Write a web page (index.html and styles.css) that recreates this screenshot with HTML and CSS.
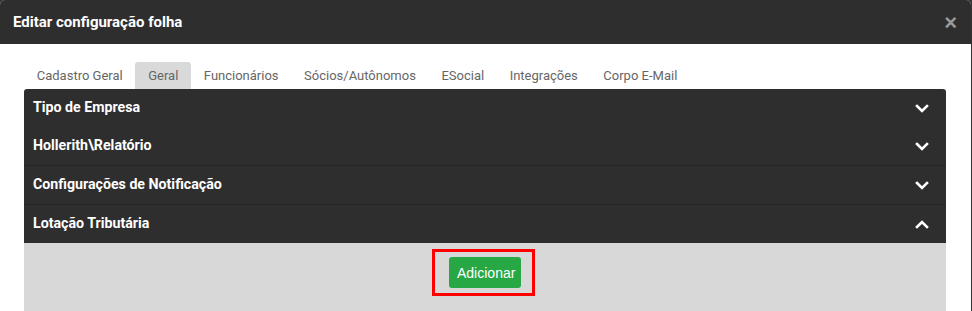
FILE: index.html
```html
<!DOCTYPE html>
<html lang="pt-BR">

<head>
  <meta charset="UTF-8">
  <meta name="viewport" content="width=device-width, initial-scale=1.0">
  <link rel="stylesheet" href="styles.css">
</head>

<body>
  <div class="config-modal">
    <div class="config-header">
      <h4 class="config-title">Editar configuração folha</h4>
      <span class="config-close">&times;</span>
    </div>
    <div class="config-body">
      <ul class="config-tabs">
        <li class="config-tab">Cadastro Geral</li>
        <li class="config-tab active">Geral</li>
        <li class="config-tab">Funcionários</li>
        <li class="config-tab">Sócios/Autônomos</li>
        <li class="config-tab">ESocial</li>
        <li class="config-tab">Integrações</li>
        <li class="config-tab">Corpo E-Mail</li>
      </ul>
      <div class="config-accordion">
        <div class="acc-row">
          <span>Tipo de Empresa</span>
          <svg class="acc-chevron" width="14" height="9" viewBox="0 0 14 9"><polyline points="2,2 7,7 12,2" /></svg>
        </div>
        <div class="acc-row">
          <span>Hollerith\Relatório</span>
          <svg class="acc-chevron" width="14" height="9" viewBox="0 0 14 9"><polyline points="2,2 7,7 12,2" /></svg>
        </div>
        <div class="acc-row acc-sep">
          <span>Configurações de Notificação</span>
          <svg class="acc-chevron" width="14" height="9" viewBox="0 0 14 9"><polyline points="2,2 7,7 12,2" /></svg>
        </div>
        <div class="acc-row acc-sep">
          <span>Lotação Tributária</span>
          <svg class="acc-chevron" width="14" height="9" viewBox="0 0 14 9"><polyline points="2,7 7,2 12,7" /></svg>
        </div>
        <div class="acc-panel">
          <div class="acc-highlight">
            <button class="acc-add-btn">Adicionar</button>
          </div>
        </div>
      </div>
    </div>
  </div>
</body>

</html>
```

FILE: styles.css
```css
body {
  margin: 0;
  background-color: #333;
  font-family: Roboto, "Liberation Sans", Arial, sans-serif;
  height: 311px;
  overflow: hidden;
}

.config-modal {
  width: 971px;
  height: 311px;
  background: #fff;
  border-radius: 5px 5px 0 0;
  overflow: hidden;
}

.config-header {
  height: 44px;
  background: #2e2e2e;
  display: flex;
  align-items: center;
  justify-content: space-between;
  padding: 0 13px;
}

.config-title {
  margin: 0;
  color: #fff;
  font-size: 15px;
  font-weight: bold;
}

.config-close {
  color: #9a9a9a;
  font-family: "Liberation Sans", Arial, sans-serif;
  font-size: 22px;
  font-weight: bold;
  line-height: 1;
  margin-top: 1px;
  margin-right: 1px;
}

.config-body {
  padding: 18px 25px 0 24px;
}

.config-tabs {
  list-style: none;
  margin: 0;
  padding: 0;
  display: flex;
}

.config-tab {
  height: 27px;
  line-height: 27px;
  padding: 0 12.75px;
  font-size: 13px;
  color: #666;
  border-radius: 3px 3px 0 0;
}

.config-tab.active {
  background: #d9d9d9;
}

.config-accordion {
  background: #2e2e2e;
  border-radius: 3px 3px 0 0;
}

.acc-row {
  box-sizing: border-box;
  height: 38px;
  padding: 0 17px 3px 9px;
  display: flex;
  align-items: center;
  justify-content: space-between;
  color: #fff;
  font-size: 14.2px;
  font-weight: bold;
}

.acc-sep {
  border-top: 1px solid #262626;
  height: 39px;
}

.acc-chevron {
  margin-top: 3px;
}

.acc-chevron polyline {
  fill: none;
  stroke: #fff;
  stroke-width: 2.6;
  stroke-linecap: square;
}

.acc-panel {
  background: #d8d8d8;
  height: 80px;
  display: flex;
  justify-content: center;
  padding-top: 6px;
}

.acc-highlight {
  border: 3px solid #f00;
  width: 97px;
  height: 41px;
  margin-right: 3px;
  display: flex;
  align-items: center;
  justify-content: center;
}

.acc-add-btn {
  background: #28a745;
  color: #fff;
  border: none;
  border-radius: 3px;
  font-family: "Liberation Sans", Arial, sans-serif;
  font-size: 14px;
  padding: 0 8px;
  height: 31px;
  width: 72px;
  margin-left: 3px;
}
```
